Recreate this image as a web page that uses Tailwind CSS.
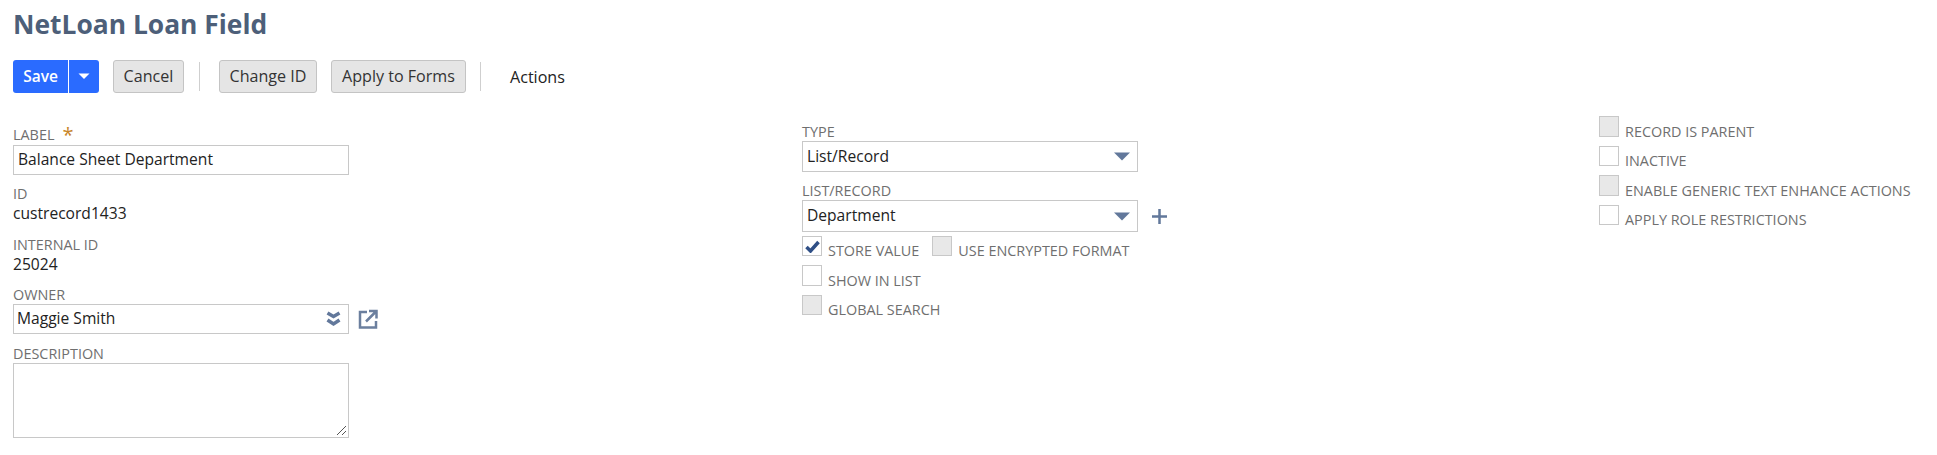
<!DOCTYPE html>
<html lang="en">
<head>
    <meta charset="UTF-8">
    <title>NetLoan Loan Field</title>
    <script src="https://cdn.jsdelivr.net/npm/@tailwindcss/browser@4"></script>
</head>
<body class="bg-white font-['Open_Sans',sans-serif] h-[455px] overflow-hidden">
    <main class="pl-[13px]">
        <h1 class="text-[26.4px] leading-[36px] pt-[6px] font-bold text-[#4d5f79]">NetLoan Loan Field</h1>

        <!-- toolbar -->
        <div class="flex items-center h-[33px] mt-[18px] text-[16.1px] font-medium text-[#333]">
            <div class="flex h-[33px] w-[86px] rounded-[3px] bg-[#2a6bff] text-white font-semibold text-[15.5px]">
                <span class="w-[56px] flex items-center justify-center border-r border-white">Save</span>
                <span class="flex-1 flex items-center justify-center">
                    <svg width="12" height="7" viewBox="0 0 12 7"><path d="M0.500 0.500h11L6 6z" fill="#fff"/></svg>
                </span>
            </div>
            <button class="ml-[14px] h-[33px] w-[71px] rounded-[3px] border border-[#c4c4c4] bg-[#e5e5e5]">Cancel</button>
            <div class="ml-[15px] w-px h-[29px] bg-[#cfcfcf]"></div>
            <button class="ml-[19px] h-[33px] w-[98px] rounded-[3px] border border-[#c4c4c4] bg-[#e5e5e5]">Change ID</button>
            <button class="ml-[14px] h-[33px] w-[135px] rounded-[3px] border border-[#c4c4c4] bg-[#e5e5e5]">Apply to Forms</button>
            <div class="ml-[14px] w-px h-[29px] bg-[#cfcfcf]"></div>
            <span class="ml-[29px] mt-[2px] text-[#222]">Actions</span>
        </div>

        <div class="flex mt-[31px]">
            <!-- left column -->
            <div class="w-[789px]">
                <div class="h-[21px] flex items-center text-[14.4px] text-[#6f6f6f]">LABEL <span class="ml-[8px] text-[20px] leading-[20px] text-[#c8862a]">*</span></div>
                <div class="h-[30px] w-[336px] border border-[#c8c8c8] pl-[4px] flex items-center text-[15.6px] text-[#222]">Balance Sheet Department</div>
                <div class="mt-[9px] h-[20px] flex items-center text-[14.4px] text-[#6f6f6f]">ID</div>
                <div class="h-[19px] flex items-center text-[15.6px] text-[#222]">custrecord1433</div>
                <div class="mt-[12px] h-[20px] flex items-center text-[14.4px] text-[#6f6f6f]">INTERNAL ID</div>
                <div class="h-[20px] flex items-center text-[15.6px] text-[#222]">25024</div>
                <div class="mt-[10px] h-[19px] flex items-center text-[14.4px] text-[#6f6f6f]">OWNER</div>
                <div class="flex items-center">
                    <div class="h-[30px] w-[336px] border border-[#c8c8c8] pl-[3px] pr-[7px] flex items-center justify-between text-[15.6px] text-[#222]">
                        Maggie Smith
                        <svg width="15" height="16" viewBox="0 0 15 16" fill="none" stroke="#62789b" stroke-width="3.500"><path d="M1.500 2l6 3.500 6-3.500M1.500 9l6 4 6-4"/></svg>
                    </div>
                    <svg class="ml-[9px]" width="20" height="20" viewBox="0 0 20 20" fill="none" stroke="#6b7f9e" stroke-width="2.500"><path d="M9 3H2v15.500h16V12M8 12.500L17.500 3M11 2h7.500v7.500"/></svg>
                </div>
                <div class="mt-[10px] h-[19px] flex items-center text-[14.4px] text-[#6f6f6f]">DESCRIPTION</div>
                <div class="relative h-[75px] w-[336px] border border-[#c8c8c8]">
                    <svg class="absolute right-px bottom-px" width="11" height="11" viewBox="0 0 11 11" stroke="#555" fill="none"><path d="M1 10L10 1M6 10l4-4"/></svg>
                </div>
            </div>

            <!-- middle column -->
            <div class="w-[797px] -mt-[2px]">
                <div class="h-[19px] flex items-center text-[14.4px] text-[#6f6f6f]">TYPE</div>
                <div class="h-[31px] w-[336px] border border-[#c8c8c8] pl-[4px] pr-[7px] flex items-center justify-between text-[15.6px] text-[#222]">
                    List/Record
                    <svg width="16" height="9" viewBox="0 0 16 9"><path d="M0 0.500h16L8 8.500z" fill="#62789b"/></svg>
                </div>
                <div class="mt-[9px] h-[19px] flex items-center text-[14.4px] text-[#6f6f6f]">LIST/RECORD</div>
                <div class="flex items-center">
                    <div class="h-[32px] w-[336px] border border-[#c8c8c8] pl-[4px] pr-[7px] flex items-center justify-between text-[15.6px] text-[#222]">
                        Department
                        <svg width="16" height="9" viewBox="0 0 16 9"><path d="M0 0.500h16L8 8.500z" fill="#62789b"/></svg>
                    </div>
                    <svg class="ml-[13px]" width="17" height="17" viewBox="0 0 17 17" stroke="#62789b" stroke-width="2.500"><path d="M8.500 1v15M1 8.500h15"/></svg>
                </div>
                <div class="mt-[4px] flex h-[21px] items-start">
                    <span class="w-[20px] h-[20px] border border-[#c8c8c8] flex items-center justify-center">
                        <svg width="15" height="13" viewBox="0 0 15 13" fill="none" stroke="#2f4f86" stroke-width="3.500"><path d="M1.500 7l4 4 8-9"/></svg>
                    </span>
                    <span class="ml-[6px] mt-[6px] leading-[18px] text-[14.4px] text-[#6f6f6f]">STORE VALUE</span>
                    <span class="ml-[13px] w-[20px] h-[20px] border border-[#c8c8c8] bg-[#e8e8e8]"></span>
                    <span class="ml-[6px] mt-[6px] leading-[18px] text-[14.4px] text-[#6f6f6f]">USE ENCRYPTED FORMAT</span>
                </div>
                <div class="mt-[8px] flex h-[21px] items-start">
                    <span class="w-[20px] h-[21px] border border-[#c8c8c8]"></span>
                    <span class="ml-[6px] mt-[7px] leading-[18px] text-[14.4px] text-[#6f6f6f]">SHOW IN LIST</span>
                </div>
                <div class="mt-[9px] flex h-[21px] items-start">
                    <span class="w-[20px] h-[20px] border border-[#c8c8c8] bg-[#e8e8e8]"></span>
                    <span class="ml-[6px] mt-[6px] leading-[18px] text-[14.4px] text-[#6f6f6f]">GLOBAL SEARCH</span>
                </div>
            </div>

            <!-- right column -->
            <div class="-mt-[8px]">
                <div class="flex h-[21px] items-start">
                    <span class="w-[20px] h-[21px] border border-[#c8c8c8] bg-[#e8e8e8]"></span>
                    <span class="ml-[6px] mt-[7px] leading-[18px] text-[14.4px] text-[#6f6f6f]">RECORD IS PARENT</span>
                </div>
                <div class="mt-[9px] flex h-[21px] items-start">
                    <span class="w-[20px] h-[20px] border border-[#c8c8c8]"></span>
                    <span class="ml-[6px] mt-[6px] leading-[18px] text-[14.4px] text-[#6f6f6f]">INACTIVE</span>
                </div>
                <div class="mt-[8px] flex h-[21px] items-start">
                    <span class="w-[20px] h-[21px] border border-[#c8c8c8] bg-[#e8e8e8]"></span>
                    <span class="ml-[6px] mt-[7px] leading-[18px] text-[14.4px] text-[#6f6f6f]">ENABLE GENERIC TEXT ENHANCE ACTIONS</span>
                </div>
                <div class="mt-[9px] flex h-[21px] items-start">
                    <span class="w-[20px] h-[20px] border border-[#c8c8c8]"></span>
                    <span class="ml-[6px] mt-[6px] leading-[18px] text-[14.4px] text-[#6f6f6f]">APPLY ROLE RESTRICTIONS</span>
                </div>
            </div>
        </div>
    </main>
</body>
</html>
